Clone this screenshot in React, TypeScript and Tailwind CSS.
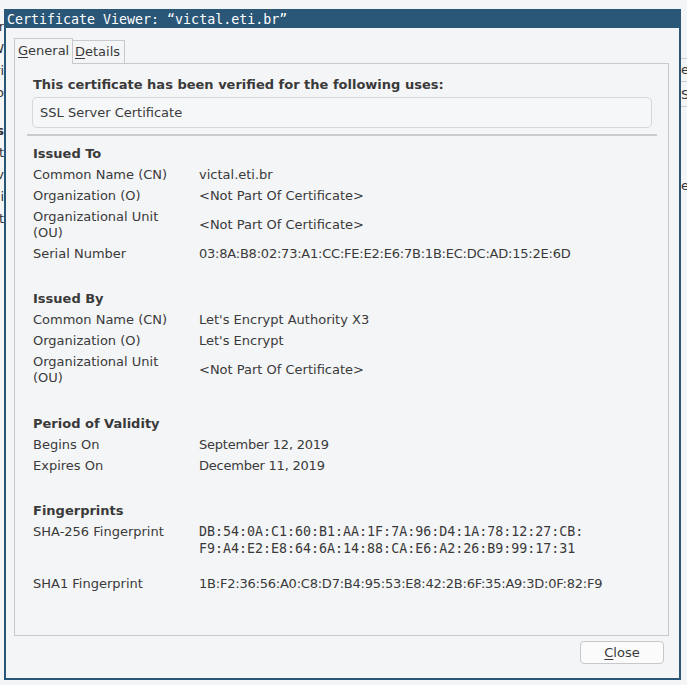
import React from 'react';

const sans = "[font-family:'DejaVu_Sans','Liberation_Sans',sans-serif]";
const mono = "[font-family:'DejaVu_Sans_Mono','Liberation_Mono',monospace]";

type Row = { label: React.ReactNode; value: React.ReactNode; tall?: boolean; num?: boolean };

const Section: React.FC<{ title: string; rows: Row[]; className?: string }> = ({ title, rows, className }) => (
  <div className={className}>
    <div className="h-[21px] leading-[21px] font-bold">{title}</div>
    {rows.map((r, i) => (
      <div key={i} className={`grid grid-cols-[166px_1fr] items-center py-[2.5px] leading-[16px] ${r.tall ? 'h-[37px]' : 'h-[21px]'}`}>
        <div>{r.label}</div>
        <div className={r.num ? 'tracking-[-0.22px]' : ''}>{r.value}</div>
      </div>
    ))}
  </div>
);

const NotPart = '<Not Part Of Certificate>';

export default function App() {
  return (
    <div className={`relative w-[687px] h-[685px] overflow-hidden bg-[#f4f5f7] text-[13px] text-[#3a3a3a] ${sans}`}>
      {/* page behind the dialog, only its edges show */}
      <div className="absolute left-[-160px] top-[16px] w-[164px] text-right leading-[22px] text-[#333]">
        <div>Numbe r</div>
        <div>Verify W</div>
        <div>Attri</div>
        <div>Do</div>
        <div className="mt-[16px] font-bold">Items</div>
        <div>Sort</div>
        <div>Nav</div>
        <div>Hi</div>
        <div>Set</div>
      </div>
      <div className="absolute left-[681px] top-[58px] w-[30px] leading-[22px] text-[#333]">
        <div className="border-y border-[#c9cbce] h-[24px]">e</div>
        <div className="border-b border-[#c9cbce] h-[25px] leading-[26px]">Sa</div>
        <div className="mt-[68px]">e</div>
      </div>

      {/* dialog window */}
      <div className="absolute left-[4px] top-[9px] w-[677px] h-[671px] flex flex-col border-2 border-[#2a5678] bg-[#f4f5f7]">
        <div className={`h-[17px] bg-[#2a5678] text-white text-[13.3px] leading-[17px] pl-px whitespace-nowrap ${mono}`}>
          Certificate Viewer: “victal.eti.br”
        </div>

        <div className="flex-1 flex flex-col pl-[8px] pr-[10px] pt-[10px]">
          {/* tabs */}
          <div className="flex items-end h-[25px]">
            <div className="relative z-10 h-[26px] w-[59px] -mb-px border border-b-0 border-[#c7c9cc] bg-[#f4f5f7] pl-[3px] leading-[24px]">
              <span className="underline underline-offset-2">G</span>eneral
            </div>
            <div className="h-[23px] w-[53px] -ml-px border border-b-0 border-[#c7c9cc] bg-[#f4f5f7] pl-[2px] leading-[22px]">
              <span className="underline underline-offset-2">D</span>etails
            </div>
          </div>

          {/* panel */}
          <div className="h-[573px] border border-[#c7c9cc] pl-[18px] pt-[13px]">
            <div className="h-[16px] leading-[16px] font-bold">This certificate has been verified for the following uses:</div>
            <div className="mt-[4px] -ml-px w-[620px] h-[31px] border border-[#d5d7da] rounded-[5px] bg-[#f6f7f9] pl-[7px] leading-[29px]">
              SSL Server Certificate
            </div>
            <div className="mt-[6px] -ml-[6px] w-[630px] h-[2px] bg-[#c9cbce]" />

            <Section
              className="mt-[7px]"
              title="Issued To"
              rows={[
                { label: 'Common Name (CN)', value: 'victal.eti.br' },
                { label: 'Organization (O)', value: NotPart },
                { label: <>Organizational Unit<br />(OU)</>, value: NotPart, tall: true },
                { label: 'Serial Number', value: '03:8A:B8:02:73:A1:CC:FE:E2:E6:7B:1B:EC:DC:AD:15:2E:6D', num: true },
              ]}
            />
            <Section
              className="mt-[24px]"
              title="Issued By"
              rows={[
                { label: 'Common Name (CN)', value: "Let's Encrypt Authority X3" },
                { label: 'Organization (O)', value: "Let's Encrypt" },
                { label: <>Organizational Unit<br />(OU)</>, value: NotPart, tall: true },
              ]}
            />
            <Section
              className="mt-[25px]"
              title="Period of Validity"
              rows={[
                { label: 'Begins On', value: 'September 12, 2019', num: true },
                { label: 'Expires On', value: 'December 11, 2019', num: true },
              ]}
            />

            <div className="mt-[24px]">
              <div className="h-[21px] leading-[21px] font-bold">Fingerprints</div>
              <div className="grid grid-cols-[166px_1fr] items-start pt-[2px] leading-[17px]">
                <div>SHA-256 Fingerprint</div>
                <div className={`text-[13.3px] ${mono}`}>
                  <div>DB:54:0A:C1:60:B1:AA:1F:7A:96:D4:1A:78:12:27:CB:</div>
                  <div>F9:A4:E2:E8:64:6A:14:88:CA:E6:A2:26:B9:99:17:31</div>
                </div>
              </div>
              <div className="grid grid-cols-[166px_1fr] mt-[19px] leading-[16px]">
                <div>SHA1 Fingerprint</div>
                <div className="tracking-[-0.22px]">1B:F2:36:56:A0:C8:D7:B4:95:53:E8:42:2B:6F:35:A9:3D:0F:82:F9</div>
              </div>
            </div>
          </div>

          {/* footer */}
          <div className="flex justify-end pt-[5px] pr-[5px]">
            <button className="w-[84px] h-[23px] rounded-[4px] border border-[#c6c8cb] bg-[#fbfbfc] leading-[21px] text-[#3a3a3a]">
              <span className="underline underline-offset-2">C</span>lose
            </button>
          </div>
        </div>
      </div>
    </div>
  );
}
